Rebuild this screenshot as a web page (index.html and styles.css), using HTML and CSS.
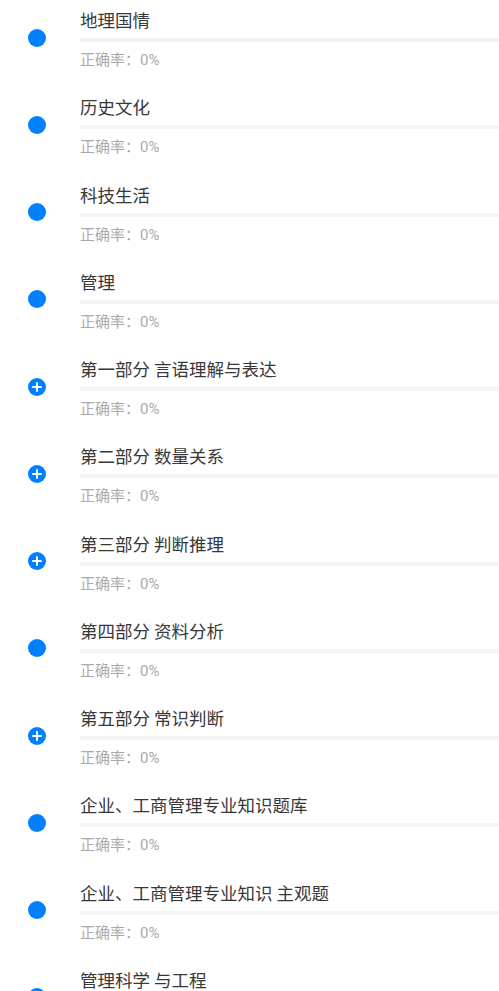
FILE: index.html
```html
<!DOCTYPE html>
<html lang="zh-CN">
<head>
<meta charset="utf-8">
<title>题库</title>
<link rel="stylesheet" href="styles.css">
</head>
<body>
<div class="list">
  <div class="item"><div class="marker"><span class="dot"></span></div><div class="body"><div class="title">地理国情</div><div class="bar"></div><div class="rate">正确率：0%</div></div></div>
  <div class="item"><div class="marker"><span class="dot"></span></div><div class="body"><div class="title">历史文化</div><div class="bar"></div><div class="rate">正确率：0%</div></div></div>
  <div class="item"><div class="marker"><span class="dot"></span></div><div class="body"><div class="title">科技生活</div><div class="bar"></div><div class="rate">正确率：0%</div></div></div>
  <div class="item"><div class="marker"><span class="dot"></span></div><div class="body"><div class="title">管理</div><div class="bar"></div><div class="rate">正确率：0%</div></div></div>
  <div class="item"><div class="marker"><span class="dot plus"></span></div><div class="body"><div class="title">第一部分 言语理解与表达</div><div class="bar"></div><div class="rate">正确率：0%</div></div></div>
  <div class="item"><div class="marker"><span class="dot plus"></span></div><div class="body"><div class="title">第二部分 数量关系</div><div class="bar"></div><div class="rate">正确率：0%</div></div></div>
  <div class="item"><div class="marker"><span class="dot plus"></span></div><div class="body"><div class="title">第三部分 判断推理</div><div class="bar"></div><div class="rate">正确率：0%</div></div></div>
  <div class="item"><div class="marker"><span class="dot"></span></div><div class="body"><div class="title">第四部分 资料分析</div><div class="bar"></div><div class="rate">正确率：0%</div></div></div>
  <div class="item"><div class="marker"><span class="dot plus"></span></div><div class="body"><div class="title">第五部分 常识判断</div><div class="bar"></div><div class="rate">正确率：0%</div></div></div>
  <div class="item"><div class="marker"><span class="dot"></span></div><div class="body"><div class="title">企业、工商管理专业知识题库</div><div class="bar"></div><div class="rate">正确率：0%</div></div></div>
  <div class="item"><div class="marker"><span class="dot"></span></div><div class="body"><div class="title">企业、工商管理专业知识 主观题</div><div class="bar"></div><div class="rate">正确率：0%</div></div></div>
  <div class="item"><div class="marker"><span class="dot"></span></div><div class="body"><div class="title">管理科学 与工程</div><div class="bar"></div><div class="rate">正确率：0%</div></div></div>
</div>
</body>
</html>
```
FILE: styles.css
```css
html, body {
  margin: 0;
  padding: 0;
  background: #ffffff;
}
body {
  font-family: Roboto, "Noto Sans CJK SC", sans-serif;
  overflow: hidden;
}
.list {
  display: flex;
  flex-direction: column;
}
.item {
  display: flex;
  height: 87.27px;
  flex-shrink: 0;
  box-sizing: border-box;
}
.marker {
  width: 80px;
  flex-shrink: 0;
  box-sizing: border-box;
  padding-left: 28px;
  padding-top: 28.5px;
}
.dot {
  position: relative;
  display: block;
  width: 18px;
  height: 18px;
  border-radius: 50%;
  background: #0080ff;
}
.dot.plus::before,
.dot.plus::after {
  content: "";
  position: absolute;
  background: #ffffff;
  border-radius: 1px;
}
.dot.plus::before {
  left: 4px;
  right: 4px;
  top: 8px;
  height: 2px;
}
.dot.plus::after {
  top: 4px;
  bottom: 4px;
  left: 8px;
  width: 2px;
}
.body {
  flex: 1;
  min-width: 0;
  padding-top: 8px;
}
.title {
  font-family: "Noto Sans CJK SC", sans-serif;
  font-size: 17.5px;
  line-height: 24px;
  color: #383838;
  white-space: nowrap;
}
.bar {
  height: 4px;
  margin-top: 6px;
  background: #f4f4f4;
}
.rate {
  margin-top: 8px;
  font-size: 15px;
  line-height: 20px;
  color: #aaaaaa;
  white-space: nowrap;
}
```
